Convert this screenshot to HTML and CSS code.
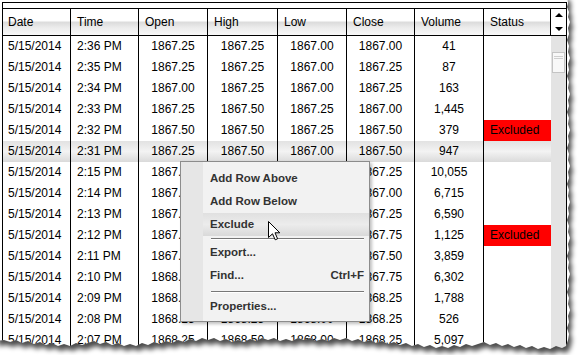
FILE: index.html
```html
<!DOCTYPE html>
<html>
<head>
<meta charset="utf-8">
<link rel="stylesheet" href="styles.css">
</head>
<body>
<div class="frame">
  <div class="head">
    <div class="hc first">Date</div>
    <div class="hc">Time</div>
    <div class="hc">Open</div>
    <div class="hc">High</div>
    <div class="hc">Low</div>
    <div class="hc">Close</div>
    <div class="hc">Volume</div>
    <div class="hc">Status</div>
    <div class="arrows"><span class="up"></span><span class="down"></span></div>
  </div>
  <div class="main">
    <div class="rows">
      <div class="row"><div class="c l first">5/15/2014</div><div class="c l">2:36 PM</div><div class="c">1867.25</div><div class="c">1867.25</div><div class="c">1867.00</div><div class="c">1867.00</div><div class="c">41</div><div class="c"></div></div>
      <div class="row"><div class="c l first">5/15/2014</div><div class="c l">2:35 PM</div><div class="c">1867.25</div><div class="c">1867.25</div><div class="c">1867.00</div><div class="c">1867.25</div><div class="c">87</div><div class="c"></div></div>
      <div class="row"><div class="c l first">5/15/2014</div><div class="c l">2:34 PM</div><div class="c">1867.00</div><div class="c">1867.25</div><div class="c">1867.00</div><div class="c">1867.25</div><div class="c">163</div><div class="c"></div></div>
      <div class="row"><div class="c l first">5/15/2014</div><div class="c l">2:33 PM</div><div class="c">1867.25</div><div class="c">1867.50</div><div class="c">1867.25</div><div class="c">1867.00</div><div class="c">1,445</div><div class="c"></div></div>
      <div class="row"><div class="c l first">5/15/2014</div><div class="c l">2:32 PM</div><div class="c">1867.50</div><div class="c">1867.50</div><div class="c">1867.25</div><div class="c">1867.50</div><div class="c">379</div><div class="c l excl">Excluded</div></div>
      <div class="row sel"><div class="c l first">5/15/2014</div><div class="c l">2:31 PM</div><div class="c">1867.25</div><div class="c">1867.50</div><div class="c">1867.00</div><div class="c">1867.50</div><div class="c">947</div><div class="c"></div></div>
      <div class="row"><div class="c l first">5/15/2014</div><div class="c l">2:15 PM</div><div class="c">1867.25</div><div class="c">1867.50</div><div class="c">1867.00</div><div class="c">1867.25</div><div class="c">10,055</div><div class="c"></div></div>
      <div class="row"><div class="c l first">5/15/2014</div><div class="c l">2:14 PM</div><div class="c">1867.25</div><div class="c">1867.25</div><div class="c">1867.00</div><div class="c">1867.00</div><div class="c">6,715</div><div class="c"></div></div>
      <div class="row"><div class="c l first">5/15/2014</div><div class="c l">2:13 PM</div><div class="c">1867.50</div><div class="c">1867.50</div><div class="c">1867.25</div><div class="c">1867.25</div><div class="c">6,590</div><div class="c"></div></div>
      <div class="row"><div class="c l first">5/15/2014</div><div class="c l">2:12 PM</div><div class="c">1867.50</div><div class="c">1867.75</div><div class="c">1867.50</div><div class="c">1867.75</div><div class="c">1,125</div><div class="c l excl">Excluded</div></div>
      <div class="row"><div class="c l first">5/15/2014</div><div class="c l">2:11 PM</div><div class="c">1867.75</div><div class="c">1867.75</div><div class="c">1867.50</div><div class="c">1867.50</div><div class="c">3,859</div><div class="c"></div></div>
      <div class="row"><div class="c l first">5/15/2014</div><div class="c l">2:10 PM</div><div class="c">1868.00</div><div class="c">1868.00</div><div class="c">1867.75</div><div class="c">1867.75</div><div class="c">6,302</div><div class="c"></div></div>
      <div class="row"><div class="c l first">5/15/2014</div><div class="c l">2:09 PM</div><div class="c">1868.25</div><div class="c">1868.25</div><div class="c">1868.00</div><div class="c">1868.25</div><div class="c">1,788</div><div class="c"></div></div>
      <div class="row"><div class="c l first">5/15/2014</div><div class="c l">2:08 PM</div><div class="c">1868.25</div><div class="c">1868.25</div><div class="c">1868.00</div><div class="c">1868.25</div><div class="c">526</div><div class="c"></div></div>
      <div class="row"><div class="c l first">5/15/2014</div><div class="c l">2:07 PM</div><div class="c">1868.25</div><div class="c">1868.50</div><div class="c">1868.00</div><div class="c">1868.25</div><div class="c">5,097</div><div class="c"></div></div>
    </div>
    <div class="track"><div class="thumb"><span class="grip"></span><span class="grip"></span></div></div>
  </div>
</div>

<div class="menu">
  <div class="mi">Add Row Above</div>
  <div class="mi">Add Row Below</div>
  <div class="mi hl">Exclude</div>
  <div class="sep s1"></div>
  <div class="mi">Export...</div>
  <div class="mi"><span>Find...</span><span>Ctrl+F</span></div>
  <div class="sep s2"></div>
  <div class="mi">Properties...</div>
</div>

<svg class="cursor" width="13" height="20" viewBox="0 0 13 20">
  <path d="M0.5,0.5 L0.5,16.5 L4.5,12.8 L7.2,18.8 L9.6,17.8 L7,11.8 L11.8,11.8 Z" fill="#fff" stroke="#000" stroke-width="1" stroke-linejoin="miter"/>
</svg>

<svg class="torn" width="580" height="355" viewBox="0 0 580 355">
  <defs>
    <filter id="blur" x="-20%" y="-20%" width="140%" height="140%">
      <feGaussianBlur stdDeviation="2.4"/>
    </filter>
    <clipPath id="outside">
      <path clip-rule="evenodd" d="M-20,-20 H600 V380 H-20 Z M-5,-5 L567,-5 L568,3 L567,7 L569,12 L568,17 L570,22 L568,28 L569,34 L567,40 L569,46 L568,52 L570,58 L568,64 L569,70 L567,76 L569,82 L568,88 L570,94 L568,100 L569,106 L567,112 L569,118 L568,124 L570,130 L568,136 L569,142 L567,148 L569,154 L568,160 L570,166 L568,172 L569,178 L567,184 L569,190 L568,196 L570,202 L568,208 L569,214 L567,220 L569,226 L568,232 L570,238 L568,244 L569,250 L567,256 L569,262 L568,268 L570,274 L568,280 L569,286 L567,292 L569,298 L568,304 L570,310 L568,316 L569,322 L567,328 L569,334 L568,340 L566,346 L562,348 L556,346 L550,349 L544,347 L538,349 L532,346 L526,348 L520,345 L514,347 L508,344 L502,346 L496,343 L490,345 L484,342 L478,344 L472,346 L466,344 L460,347 L454,345 L448,348 L442,346 L436,348 L430,345 L424,347 L418,344 L412,346 L406,343 L400,345 L394,342 L388,344 L382,341 L376,343 L370,340 L364,342 L358,339 L352,341 L346,338 L340,340 L334,338 L328,341 L322,339 L316,341 L310,338 L304,340 L298,338 L292,341 L286,339 L280,341 L274,338 L268,340 L262,338 L256,341 L250,339 L244,342 L238,340 L232,342 L226,339 L220,341 L214,338 L208,340 L202,338 L196,341 L190,339 L184,342 L178,340 L172,343 L166,341 L160,344 L154,342 L148,345 L142,343 L136,346 L130,344 L124,346 L118,343 L112,345 L106,342 L100,344 L94,341 L88,343 L82,345 L76,343 L70,346 L64,344 L58,346 L52,343 L46,345 L40,342 L34,344 L28,341 L22,343 L16,340 L10,342 L4,340 L-5,341 Z"/>
    </clipPath>
  </defs>
  <path fill="#fff" fill-rule="evenodd" d="M-20,-20 H600 V380 H-20 Z M-5,-5 L567,-5 L568,3 L567,7 L569,12 L568,17 L570,22 L568,28 L569,34 L567,40 L569,46 L568,52 L570,58 L568,64 L569,70 L567,76 L569,82 L568,88 L570,94 L568,100 L569,106 L567,112 L569,118 L568,124 L570,130 L568,136 L569,142 L567,148 L569,154 L568,160 L570,166 L568,172 L569,178 L567,184 L569,190 L568,196 L570,202 L568,208 L569,214 L567,220 L569,226 L568,232 L570,238 L568,244 L569,250 L567,256 L569,262 L568,268 L570,274 L568,280 L569,286 L567,292 L569,298 L568,304 L570,310 L568,316 L569,322 L567,328 L569,334 L568,340 L566,346 L562,348 L556,346 L550,349 L544,347 L538,349 L532,346 L526,348 L520,345 L514,347 L508,344 L502,346 L496,343 L490,345 L484,342 L478,344 L472,346 L466,344 L460,347 L454,345 L448,348 L442,346 L436,348 L430,345 L424,347 L418,344 L412,346 L406,343 L400,345 L394,342 L388,344 L382,341 L376,343 L370,340 L364,342 L358,339 L352,341 L346,338 L340,340 L334,338 L328,341 L322,339 L316,341 L310,338 L304,340 L298,338 L292,341 L286,339 L280,341 L274,338 L268,340 L262,338 L256,341 L250,339 L244,342 L238,340 L232,342 L226,339 L220,341 L214,338 L208,340 L202,338 L196,341 L190,339 L184,342 L178,340 L172,343 L166,341 L160,344 L154,342 L148,345 L142,343 L136,346 L130,344 L124,346 L118,343 L112,345 L106,342 L100,344 L94,341 L88,343 L82,345 L76,343 L70,346 L64,344 L58,346 L52,343 L46,345 L40,342 L34,344 L28,341 L22,343 L16,340 L10,342 L4,340 L-5,341 Z"/>
  <g clip-path="url(#outside)">
    <path transform="translate(3,5)" fill="#000" fill-opacity="0.7" filter="url(#blur)" d="M-5,-5 L567,-5 L568,3 L567,7 L569,12 L568,17 L570,22 L568,28 L569,34 L567,40 L569,46 L568,52 L570,58 L568,64 L569,70 L567,76 L569,82 L568,88 L570,94 L568,100 L569,106 L567,112 L569,118 L568,124 L570,130 L568,136 L569,142 L567,148 L569,154 L568,160 L570,166 L568,172 L569,178 L567,184 L569,190 L568,196 L570,202 L568,208 L569,214 L567,220 L569,226 L568,232 L570,238 L568,244 L569,250 L567,256 L569,262 L568,268 L570,274 L568,280 L569,286 L567,292 L569,298 L568,304 L570,310 L568,316 L569,322 L567,328 L569,334 L568,340 L566,346 L562,348 L556,346 L550,349 L544,347 L538,349 L532,346 L526,348 L520,345 L514,347 L508,344 L502,346 L496,343 L490,345 L484,342 L478,344 L472,346 L466,344 L460,347 L454,345 L448,348 L442,346 L436,348 L430,345 L424,347 L418,344 L412,346 L406,343 L400,345 L394,342 L388,344 L382,341 L376,343 L370,340 L364,342 L358,339 L352,341 L346,338 L340,340 L334,338 L328,341 L322,339 L316,341 L310,338 L304,340 L298,338 L292,341 L286,339 L280,341 L274,338 L268,340 L262,338 L256,341 L250,339 L244,342 L238,340 L232,342 L226,339 L220,341 L214,338 L208,340 L202,338 L196,341 L190,339 L184,342 L178,340 L172,343 L166,341 L160,344 L154,342 L148,345 L142,343 L136,346 L130,344 L124,346 L118,343 L112,345 L106,342 L100,344 L94,341 L88,343 L82,345 L76,343 L70,346 L64,344 L58,346 L52,343 L46,345 L40,342 L34,344 L28,341 L22,343 L16,340 L10,342 L4,340 L-5,341 Z"/>
  </g>
</svg>
</body>
</html>
```

FILE: styles.css
```css
html, body {
  margin: 0;
  padding: 0;
}

body {
  position: relative;
  width: 580px;
  height: 355px;
  overflow: hidden;
  background: #fff;
  font-family: "Liberation Sans", Arial, sans-serif;
  font-size: 12px;
  color: #000;
}

.frame {
  margin: 2px 0 0 2px;
  width: 563px;
  border: 1px solid #000;
  border-bottom: none;
  padding-top: 5px;
}

.head {
  display: grid;
  grid-template-columns: 68px 68px 69px 70px 69px 68px 69px 67px 15px;
  height: 26px;
  border-top: 1px solid #000;
  border-bottom: 1px solid #000;
  background: linear-gradient(to bottom, #ffffff 0%, #ffffff 44%, #dcdcdc 52%, #ececec 72%, #f8f8f8 100%);
}

.hc {
  box-sizing: border-box;
  border-right: 1px solid #000;
  padding-left: 6px;
  line-height: 27px;
  white-space: nowrap;
  overflow: hidden;
}

.hc.first {
  padding-left: 5px;
}

.arrows {
  display: flex;
  flex-direction: column;
  align-items: center;
  padding-top: 4px;
  gap: 10px;
  background: #fff;
}

.up {
  width: 0;
  height: 0;
  border-left: 4px solid transparent;
  border-right: 4px solid transparent;
  border-bottom: 4px solid #000;
}

.down {
  width: 0;
  height: 0;
  border-left: 4px solid transparent;
  border-right: 4px solid transparent;
  border-top: 4px solid #000;
}

.main {
  display: flex;
}

.rows {
  width: 548px;
}

.row {
  display: grid;
  grid-template-columns: 68px 68px 69px 70px 69px 68px 69px 67px;
  height: 21px;
  line-height: 21px;
}

.row.sel {
  background: linear-gradient(to bottom, #e2e2e2 0%, #f3f3f3 50%, #dadada 100%);
}

.c {
  box-sizing: border-box;
  border-right: 1px solid #000;
  text-align: center;
  white-space: nowrap;
  overflow: hidden;
}

.c:last-child {
  border-right: none;
}

.c.l {
  text-align: left;
  padding-left: 6px;
}

.c.l.first {
  padding-left: 5px;
}

.c.excl {
  background: #ff0000;
  color: #000;
}

.track {
  width: 15px;
  background: #e3e3e3;
  display: flex;
  flex-direction: column;
}

.thumb {
  box-sizing: border-box;
  margin: 16px 0 0 1px;
  width: 13px;
  height: 21px;
  background: #f8f8f8;
  border: 1px solid #c4c4c4;
  display: flex;
  flex-direction: column;
  align-items: center;
  padding-top: 3px;
  gap: 1px;
}

.grip {
  width: 9px;
  height: 1px;
  background: #cfcfcf;
}

.menu {
  position: absolute;
  left: 180px;
  top: 161px;
  width: 188px;
  border: 1px solid #8c8c8c;
  background: linear-gradient(to right, #e6e6e6 0, #e6e6e6 22px, #f2f2f2 22px);
  padding: 5px 0 3px;
  box-shadow: 2px 2px 3px rgba(0, 0, 0, 0.25);
  font-weight: bold;
  font-size: 11.5px;
  color: #333;
}

.mi {
  display: flex;
  justify-content: space-between;
  height: 23px;
  line-height: 23px;
  margin-left: 22px;
  padding-left: 7px;
  padding-right: 5px;
  white-space: nowrap;
}

.mi.hl {
  background: linear-gradient(to bottom, #e0e0e0 0%, #ececec 50%, #d9d9d9 100%);
}

.sep {
  height: 0;
  margin-left: 30px;
  margin-right: 5px;
  border-top: 1px solid #777;
  border-bottom: 1px solid #fff;
}

.sep.s1 {
  margin-top: 2px;
  margin-bottom: 1px;
}

.sep.s2 {
  margin-top: 4px;
  margin-bottom: 2px;
}

.cursor {
  position: absolute;
  left: 268px;
  top: 221px;
}

.torn {
  position: absolute;
  left: 0;
  top: 0;
  pointer-events: none;
}
```
